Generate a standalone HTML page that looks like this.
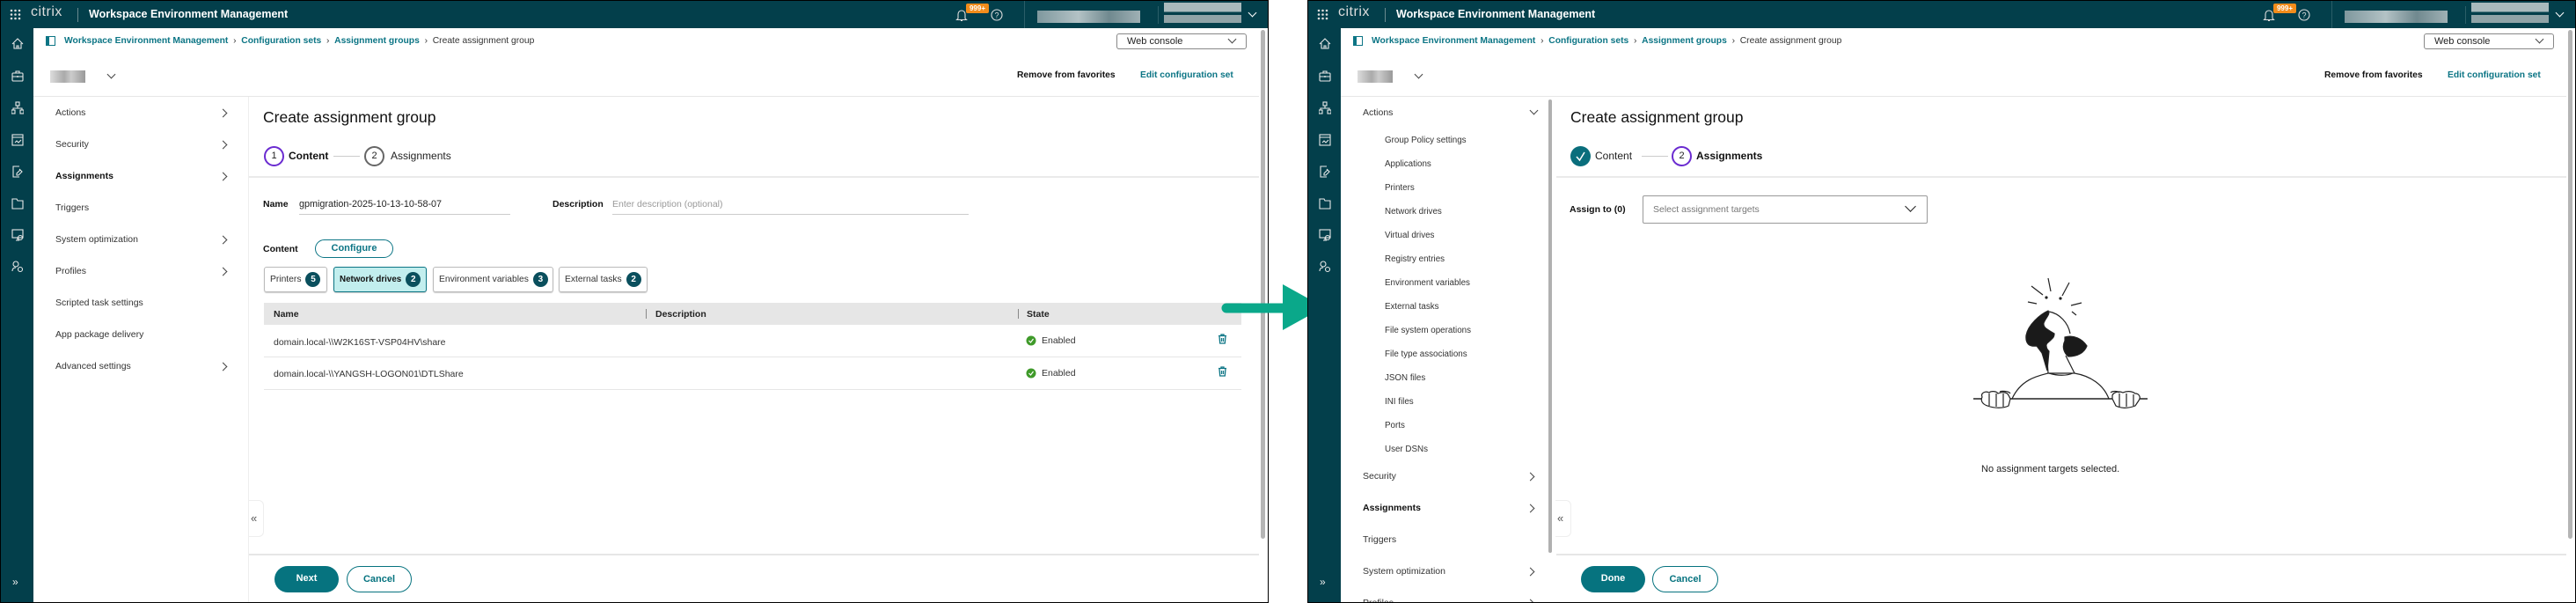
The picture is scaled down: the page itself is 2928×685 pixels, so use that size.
<!DOCTYPE html>
<html><head><meta charset="utf-8">
<style>
*{margin:0;padding:0;box-sizing:border-box}
body{width:2928px;height:685px;background:#fff;position:relative;overflow:hidden;font-family:"Liberation Sans",Arial,sans-serif;color:#222}
.a{position:absolute;white-space:nowrap;line-height:14px}
.p{position:absolute;top:0;width:1442px;height:685px;background:#fff;border:1px solid #000;overflow:hidden}
.top{position:absolute;left:0;top:0;width:1442px;height:31px;background:#033f4b}
.rail{position:absolute;left:0;top:31px;width:37px;height:654px;background:#033f4b}
.ln{position:absolute;background:#e6e6e6}
.link{color:#0c7585;font-weight:bold}
.nav{font-size:10.5px;color:#333}
.chev{position:absolute;width:7px;height:7px;border-right:1.3px solid #444;border-bottom:1.3px solid #444}
.badge{display:inline-block;width:17px;height:17px;border-radius:50%;background:#0a4f5d;color:#fff;font-size:10px;font-weight:bold;text-align:center;line-height:17px;margin-left:5px;vertical-align:middle}
.tab{position:absolute;top:302px;height:29px;border:1px solid #bbb;border-radius:3px;font-size:10.3px;line-height:27px;padding-left:6px;color:#333;box-shadow:0 1px 1px #ccc;white-space:nowrap;overflow:hidden}
.btn{position:absolute;height:30px;border-radius:15px;font-size:11px;font-weight:bold;text-align:center;line-height:28px}
</style></head><body>

<!-- ================= LEFT PANEL ================= -->
<div class="p" style="left:0">
 <div class="top"></div>
 <svg class="a" style="left:10px;top:9px" width="13" height="13"><g fill="#ddd"><circle cx="2" cy="2" r="1.3"/><circle cx="6.5" cy="2" r="1.3"/><circle cx="11" cy="2" r="1.3"/><circle cx="2" cy="6.5" r="1.3"/><circle cx="6.5" cy="6.5" r="1.3"/><circle cx="11" cy="6.5" r="1.3"/><circle cx="2" cy="11" r="1.3"/><circle cx="6.5" cy="11" r="1.3"/><circle cx="11" cy="11" r="1.3"/></g></svg>
 <div class="a" style="left:34px;top:6px;font-size:16px;color:#ddd;letter-spacing:0.5px">citrix</div>
 <div class="a" style="left:87px;top:8px;width:1px;height:16px;background:#6a8a90"></div>
 <div class="a" style="left:100px;top:8px;font-size:12.5px;font-weight:bold;color:#fff">Workspace Environment Management</div>
 <svg class="a" style="left:1085px;top:8px" width="14" height="16"><path d="M3 12V7a4 4 0 0 1 8 0v5l1.5 1.5h-11z M6 14.5h2" stroke="#ddd" fill="none" stroke-width="1.1"/></svg>
 <div class="a" style="left:1097px;top:3px;width:26px;height:11px;background:#f28c1b;border-radius:2px;color:#fff;font-size:8px;font-weight:bold;line-height:11px;text-align:center">999+</div>
 <svg class="a" style="left:1125px;top:9px" width="14" height="14"><circle cx="7" cy="7" r="6" stroke="#ddd" fill="none" stroke-width="1.1"/><text x="7" y="10.5" font-size="9" fill="#ddd" text-anchor="middle" font-family="Liberation Sans">?</text></svg>
 <div class="a" style="left:1163px;top:0;width:1px;height:31px;background:#2a5e68"></div>
 <div class="a" style="left:1178px;top:11px;width:117px;height:14px;background:linear-gradient(90deg,#7f989e,#b3c2c5 40%,#70898f 70%,#9fb1b5)"></div>
 <div class="a" style="left:1315px;top:6px;width:1px;height:20px;background:#2a5e68"></div>
 <div class="a" style="left:1322px;top:2px;width:88px;height:23px;background:linear-gradient(180deg,#a9babd 0,#a9babd 45%,#033f4b 45%,#033f4b 60%,#8fa3a7 60%)"></div>
 <div class="chev" style="left:1419px;top:10px;border-color:#fff;transform:rotate(45deg)"></div>

 <div class="rail"></div>
 <svg class="a" style="left:12px;top:42px" width="14" height="250" fill="none" stroke="#e8e8e8" stroke-width="1.1">
  <path d="M1 7L7 1l6 6M3 6v6h8V6M6 12V9h2v3"/>
  <g transform="translate(0,37)"><rect x="1" y="3" width="12" height="9" rx="1"/><path d="M5 3V1h4v2M1 7h12M7 6v2"/></g>
  <g transform="translate(0,73)"><rect x="5" y="0" width="4" height="4"/><rect x="0" y="9" width="4" height="4"/><rect x="10" y="9" width="4" height="4"/><path d="M7 4v3M2 9V7h10v2"/></g>
  <g transform="translate(0,109)"><rect x="1" y="1" width="12" height="12"/><path d="M1 4h12M4 10l2-2 2 2 3-3"/></g>
  <g transform="translate(0,145)"><path d="M9 1H2v12h7M9 4l3 3-4 4h-2v-2l4-4"/></g>
  <g transform="translate(0,181)"><path d="M1 2h5l1 2h6v9H1z"/></g>
  <g transform="translate(0,217)"><rect x="1" y="1" width="12" height="9"/><path d="M5 13h4M7 10v3"/><circle cx="10" cy="10" r="2.5"/></g>
 </svg>
 <svg class="a" style="left:12px;top:295px" width="14" height="14" fill="none" stroke="#e8e8e8" stroke-width="1.1"><circle cx="5" cy="4" r="3"/><path d="M1 12c0-3 2-4 4-4"/><circle cx="10" cy="10" r="2.5"/></svg>
 <div class="a" style="left:13px;top:653px;font-size:12px;color:#eee">»</div>

 <svg class="a" style="left:51px;top:40px" width="11" height="11"><rect x="0.5" y="0.5" width="10" height="10" stroke="#0c7585" fill="none"/><rect x="1" y="1" width="3" height="9" fill="#0c7585"/></svg>
 <div class="a" style="left:72px;top:39px;font-size:10.3px"><span class="link">Workspace Environment Management</span> <span style="color:#333">&nbsp;›&nbsp;</span> <span class="link">Configuration sets</span> <span style="color:#333">&nbsp;›&nbsp;</span> <span class="link">Assignment groups</span> <span style="color:#333">&nbsp;›&nbsp;</span> <span style="color:#333">Create assignment group</span></div>
 <div class="a" style="left:1268px;top:37px;width:148px;height:18px;border:1px solid #888;border-radius:3px"></div>
 <div class="a" style="left:1280px;top:39px;font-size:11px;color:#222">Web console</div>
 <div class="chev" style="left:1396px;top:40px;transform:rotate(45deg)"></div>
 <div class="a" style="left:1432px;top:33px;width:5px;height:578px;background:#b5b5b5;border-radius:3px"></div>

 <div class="a" style="left:56px;top:79px;width:40px;height:14px;background:linear-gradient(90deg,#ddd,#aaa 40%,#ccc 60%,#999)"></div>
 <div class="chev" style="left:122px;top:80px;transform:rotate(45deg)"></div>
 <div class="a" style="left:1155px;top:78px;font-size:10.3px;font-weight:bold;color:#111">Remove from favorites</div>
 <div class="a link" style="left:1295px;top:78px;font-size:10.3px">Edit configuration set</div>
 <div class="ln" style="left:37px;top:108px;width:1393px;height:1px"></div>

 <div class="ln" style="left:281px;top:109px;width:1px;height:576px;background:#eee"></div>
 <div class="a nav" style="left:62px;top:120px">Actions</div>
 <div class="a nav" style="left:62px;top:156px">Security</div>
 <div class="a nav" style="left:62px;top:192px;font-weight:bold;color:#111">Assignments</div>
 <div class="a nav" style="left:62px;top:228px">Triggers</div>
 <div class="a nav" style="left:62px;top:264px">System optimization</div>
 <div class="a nav" style="left:62px;top:300px">Profiles</div>
 <div class="a nav" style="left:62px;top:336px">Scripted task settings</div>
 <div class="a nav" style="left:62px;top:372px">App package delivery</div>
 <div class="a nav" style="left:62px;top:408px">Advanced settings</div>
 <div class="chev" style="left:249px;top:124px;transform:rotate(-45deg)"></div>
 <div class="chev" style="left:249px;top:160px;transform:rotate(-45deg)"></div>
 <div class="chev" style="left:249px;top:196px;transform:rotate(-45deg)"></div>
 <div class="chev" style="left:249px;top:268px;transform:rotate(-45deg)"></div>
 <div class="chev" style="left:249px;top:304px;transform:rotate(-45deg)"></div>
 <div class="chev" style="left:249px;top:412px;transform:rotate(-45deg)"></div>

 <div class="a" style="left:298px;top:122px;font-size:17.5px;line-height:20px;color:#111">Create assignment group</div>
 <div class="a" style="left:299px;top:165px;width:23px;height:23px;border:2px solid #6a2bd0;border-radius:50%;font-size:11px;line-height:19px;text-align:center">1</div>
 <div class="a" style="left:327px;top:169px;font-size:12px;font-weight:bold;color:#111">Content</div>
 <div class="a" style="left:378px;top:176px;width:30px;height:1px;background:#ccc"></div>
 <div class="a" style="left:413px;top:165px;width:23px;height:23px;border:2px solid #666;border-radius:50%;font-size:11px;line-height:19px;text-align:center">2</div>
 <div class="a" style="left:443px;top:169px;font-size:12px;color:#222">Assignments</div>
 <div class="ln" style="left:282px;top:199px;width:1148px;height:2px;background:#eaeaea"></div>

 <div class="a" style="left:298px;top:224px;font-size:10.5px;font-weight:bold;color:#111">Name</div>
 <div class="a" style="left:339px;top:224px;font-size:10.8px;color:#222">gpmigration-2025-10-13-10-58-07</div>
 <div class="ln" style="left:339px;top:242px;width:240px;height:1px;background:#ccc"></div>
 <div class="a" style="left:627px;top:224px;font-size:10.5px;font-weight:bold;color:#111">Description</div>
 <div class="a" style="left:695px;top:224px;font-size:10.5px;color:#999">Enter description (optional)</div>
 <div class="ln" style="left:695px;top:242px;width:405px;height:1px;background:#ccc"></div>

 <div class="a" style="left:298px;top:275px;font-size:10.5px;font-weight:bold;color:#111">Content</div>
 <div class="btn" style="left:357px;top:271px;width:89px;height:21px;line-height:19px;border:1.5px solid #0c7585;color:#0c7585">Configure</div>
 <div class="tab" style="left:299px;width:72px">Printers<span class="badge">5</span></div>
 <div class="tab" style="left:378px;width:106px;background:#c2eeee;border-color:#0c7585;font-weight:bold;color:#111;font-size:9.8px">Network drives<span class="badge">2</span></div>
 <div class="tab" style="left:491px;width:137px">Environment variables<span class="badge">3</span></div>
 <div class="tab" style="left:634px;width:101px">External tasks<span class="badge">2</span></div>

 <div class="a" style="left:299px;top:343px;width:1111px;height:25px;background:#e6e6e6"></div>
 <div class="a" style="left:310px;top:349px;font-size:10.5px;font-weight:bold;color:#222">Name</div>
 <div class="a" style="left:733px;top:350px;width:1px;height:11px;background:#888"></div>
 <div class="a" style="left:744px;top:349px;font-size:10.5px;font-weight:bold;color:#222">Description</div>
 <div class="a" style="left:1156px;top:350px;width:1px;height:11px;background:#888"></div>
 <div class="a" style="left:1166px;top:349px;font-size:10.5px;font-weight:bold;color:#222">State</div>
 <div class="a" style="left:310px;top:381px;font-size:10.5px;color:#333">domain.local-\\W2K16ST-VSP04HV\share</div>
 <div class="a" style="left:310px;top:417px;font-size:10.5px;color:#333">domain.local-\\YANGSH-LOGON01\DTLShare</div>
 <div class="ln" style="left:299px;top:404px;width:1111px;height:1px"></div>
 <div class="ln" style="left:299px;top:441px;width:1111px;height:1px"></div>
 <svg class="a" style="left:1165px;top:380px" width="12" height="50"><g><circle cx="6" cy="6" r="5.5" fill="#3f9a2a"/><path d="M3.5 6l2 2 3-4" stroke="#fff" fill="none" stroke-width="1.2"/></g><g transform="translate(0,37)"><circle cx="6" cy="6" r="5.5" fill="#3f9a2a"/><path d="M3.5 6l2 2 3-4" stroke="#fff" fill="none" stroke-width="1.2"/></g></svg>
 <div class="a" style="left:1183px;top:379px;font-size:10.5px;color:#333">Enabled</div>
 <div class="a" style="left:1183px;top:416px;font-size:10.5px;color:#333">Enabled</div>
 <svg class="a" style="left:1383px;top:378px" width="11" height="50" fill="none" stroke="#0c7585" stroke-width="1.3"><path d="M1 2.5h9M4 2.5V1h3v1.5M2 3l.7 8h5.6L9 3M4.5 5v4M6.5 5v4"/><g transform="translate(0,37)"><path d="M1 2.5h9M4 2.5V1h3v1.5M2 3l.7 8h5.6L9 3M4.5 5v4M6.5 5v4"/></g></svg>

 <div class="a" style="left:282px;top:567px;width:17px;height:42px;border:1px solid #eee;border-left:none;border-radius:0 6px 6px 0;font-size:13px;line-height:40px;color:#555;padding-left:2px">«</div>
 <div class="ln" style="left:282px;top:628px;width:1148px;height:2px;background:#e6e6e6"></div>
 <div class="btn" style="left:311px;top:642px;width:73px;background:#06737f;color:#fff">Next</div>
 <div class="btn" style="left:393px;top:642px;width:74px;border:1.5px solid #06737f;color:#06737f">Cancel</div>
</div>

<!-- arrow -->
<svg class="a" style="left:1380px;top:315px" width="130" height="70"><path d="M14 35h70" stroke="#0aa88a" stroke-width="11" stroke-linecap="round"/><path d="M78 8L125 34 78 60z" fill="#0aa88a"/></svg>

<!-- ================= RIGHT PANEL ================= -->
<div class="p" style="left:1486px">
 <div class="top"></div>
 <svg class="a" style="left:10px;top:9px" width="13" height="13"><g fill="#ddd"><circle cx="2" cy="2" r="1.3"/><circle cx="6.5" cy="2" r="1.3"/><circle cx="11" cy="2" r="1.3"/><circle cx="2" cy="6.5" r="1.3"/><circle cx="6.5" cy="6.5" r="1.3"/><circle cx="11" cy="6.5" r="1.3"/><circle cx="2" cy="11" r="1.3"/><circle cx="6.5" cy="11" r="1.3"/><circle cx="11" cy="11" r="1.3"/></g></svg>
 <div class="a" style="left:34px;top:6px;font-size:16px;color:#ddd;letter-spacing:0.5px">citrix</div>
 <div class="a" style="left:87px;top:8px;width:1px;height:16px;background:#6a8a90"></div>
 <div class="a" style="left:100px;top:8px;font-size:12.5px;font-weight:bold;color:#fff">Workspace Environment Management</div>
 <svg class="a" style="left:1085px;top:8px" width="14" height="16"><path d="M3 12V7a4 4 0 0 1 8 0v5l1.5 1.5h-11z M6 14.5h2" stroke="#ddd" fill="none" stroke-width="1.1"/></svg>
 <div class="a" style="left:1097px;top:3px;width:26px;height:11px;background:#f28c1b;border-radius:2px;color:#fff;font-size:8px;font-weight:bold;line-height:11px;text-align:center">999+</div>
 <svg class="a" style="left:1125px;top:9px" width="14" height="14"><circle cx="7" cy="7" r="6" stroke="#ddd" fill="none" stroke-width="1.1"/><text x="7" y="10.5" font-size="9" fill="#ddd" text-anchor="middle" font-family="Liberation Sans">?</text></svg>
 <div class="a" style="left:1163px;top:0;width:1px;height:31px;background:#2a5e68"></div>
 <div class="a" style="left:1178px;top:11px;width:117px;height:14px;background:linear-gradient(90deg,#7f989e,#b3c2c5 40%,#70898f 70%,#9fb1b5)"></div>
 <div class="a" style="left:1315px;top:6px;width:1px;height:20px;background:#2a5e68"></div>
 <div class="a" style="left:1322px;top:2px;width:88px;height:23px;background:linear-gradient(180deg,#a9babd 0,#a9babd 45%,#033f4b 45%,#033f4b 60%,#8fa3a7 60%)"></div>
 <div class="chev" style="left:1419px;top:10px;border-color:#fff;transform:rotate(45deg)"></div>

 <div class="rail"></div>
 <svg class="a" style="left:12px;top:42px" width="14" height="250" fill="none" stroke="#e8e8e8" stroke-width="1.1">
  <path d="M1 7L7 1l6 6M3 6v6h8V6M6 12V9h2v3"/>
  <g transform="translate(0,37)"><rect x="1" y="3" width="12" height="9" rx="1"/><path d="M5 3V1h4v2M1 7h12M7 6v2"/></g>
  <g transform="translate(0,73)"><rect x="5" y="0" width="4" height="4"/><rect x="0" y="9" width="4" height="4"/><rect x="10" y="9" width="4" height="4"/><path d="M7 4v3M2 9V7h10v2"/></g>
  <g transform="translate(0,109)"><rect x="1" y="1" width="12" height="12"/><path d="M1 4h12M4 10l2-2 2 2 3-3"/></g>
  <g transform="translate(0,145)"><path d="M9 1H2v12h7M9 4l3 3-4 4h-2v-2l4-4"/></g>
  <g transform="translate(0,181)"><path d="M1 2h5l1 2h6v9H1z"/></g>
  <g transform="translate(0,217)"><rect x="1" y="1" width="12" height="9"/><path d="M5 13h4M7 10v3"/><circle cx="10" cy="10" r="2.5"/></g>
 </svg>
 <svg class="a" style="left:12px;top:295px" width="14" height="14" fill="none" stroke="#e8e8e8" stroke-width="1.1"><circle cx="5" cy="4" r="3"/><path d="M1 12c0-3 2-4 4-4"/><circle cx="10" cy="10" r="2.5"/></svg>
 <div class="a" style="left:13px;top:653px;font-size:12px;color:#eee">»</div>

 <svg class="a" style="left:51px;top:40px" width="11" height="11"><rect x="0.5" y="0.5" width="10" height="10" stroke="#0c7585" fill="none"/><rect x="1" y="1" width="3" height="9" fill="#0c7585"/></svg>
 <div class="a" style="left:72px;top:39px;font-size:10.3px"><span class="link">Workspace Environment Management</span> <span style="color:#333">&nbsp;›&nbsp;</span> <span class="link">Configuration sets</span> <span style="color:#333">&nbsp;›&nbsp;</span> <span class="link">Assignment groups</span> <span style="color:#333">&nbsp;›&nbsp;</span> <span style="color:#333">Create assignment group</span></div>
 <div class="a" style="left:1268px;top:37px;width:148px;height:18px;border:1px solid #888;border-radius:3px"></div>
 <div class="a" style="left:1280px;top:39px;font-size:11px;color:#222">Web console</div>
 <div class="chev" style="left:1396px;top:40px;transform:rotate(45deg)"></div>
 <div class="a" style="left:1432px;top:33px;width:5px;height:578px;background:#b5b5b5;border-radius:3px"></div>

 <div class="a" style="left:56px;top:79px;width:40px;height:14px;background:linear-gradient(90deg,#ddd,#aaa 40%,#ccc 60%,#999)"></div>
 <div class="chev" style="left:122px;top:80px;transform:rotate(45deg)"></div>
 <div class="a" style="left:1155px;top:78px;font-size:10.3px;font-weight:bold;color:#111">Remove from favorites</div>
 <div class="a link" style="left:1295px;top:78px;font-size:10.3px">Edit configuration set</div>
 <div class="ln" style="left:37px;top:108px;width:1393px;height:1px"></div>

 <div class="a" style="left:273px;top:112px;width:4px;height:515px;background:#b0b0b0;border-radius:2px"></div>
 <div class="a nav" style="left:62px;top:120px">Actions</div>
 <div class="chev" style="left:253px;top:121px;transform:rotate(45deg)"></div>
 <div class="a" style="left:87px;top:145px;font-size:9.8px;color:#333;line-height:27px">Group Policy settings<br>Applications<br>Printers<br>Network drives<br>Virtual drives<br>Registry entries<br>Environment variables<br>External tasks<br>File system operations<br>File type associations<br>JSON files<br>INI files<br>Ports<br>User DSNs</div>
 <div class="a nav" style="left:62px;top:533px">Security</div>
 <div class="a nav" style="left:62px;top:569px;font-weight:bold;color:#111">Assignments</div>
 <div class="a nav" style="left:62px;top:605px">Triggers</div>
 <div class="a nav" style="left:62px;top:641px">System optimization</div>
 <div class="a nav" style="left:62px;top:677px">Profiles</div>
 <div class="chev" style="left:249px;top:537px;transform:rotate(-45deg)"></div>
 <div class="chev" style="left:249px;top:573px;transform:rotate(-45deg)"></div>
 <div class="chev" style="left:249px;top:645px;transform:rotate(-45deg)"></div>
 <div class="chev" style="left:249px;top:681px;transform:rotate(-45deg)"></div>

 <div class="a" style="left:298px;top:122px;font-size:17.5px;line-height:20px;color:#111">Create assignment group</div>
 <svg class="a" style="left:298px;top:165px" width="23" height="23"><circle cx="11.5" cy="11.5" r="11.5" fill="#0a6e7c"/><path d="M7 12l3.5 4L16 7" stroke="#fff" fill="none" stroke-width="1.5"/></svg>
 <div class="a" style="left:326px;top:169px;font-size:12px;color:#222">Content</div>
 <div class="a" style="left:379px;top:176px;width:30px;height:1px;background:#ccc"></div>
 <div class="a" style="left:413px;top:165px;width:23px;height:23px;border:2px solid #6a2bd0;border-radius:50%;font-size:11px;line-height:19px;text-align:center">2</div>
 <div class="a" style="left:441px;top:169px;font-size:12px;font-weight:bold;color:#111">Assignments</div>
 <div class="ln" style="left:282px;top:199px;width:1148px;height:2px;background:#eaeaea"></div>

 <div class="a" style="left:297px;top:230px;font-size:10.5px;font-weight:bold;color:#111">Assign to (0)</div>
 <div class="a" style="left:380px;top:221px;width:324px;height:32px;border:1px solid #999;border-radius:2px"></div>
 <div class="a" style="left:392px;top:230px;font-size:10.5px;color:#777">Select assignment targets</div>
 <div class="chev" style="left:680px;top:229px;width:9px;height:9px;border-color:#222;border-width:1.6px;transform:rotate(45deg)"></div>

 <svg class="a" style="left:714px;top:280px" width="300" height="200" fill="none" stroke="#222" stroke-width="1.2">
  <path d="M42 172H240" stroke-width="1.5"/>
  <path d="M86 172C96 150 115 146 127 143H157C175 146 190 156 196 172"/>
  <path d="M125 112L127 143M147 123L157 143"/>
  <path d="M128 143C138 146 148 146 155 143"/>
  <path d="M128 73C140 75 150 86 152 98"/>
  <path d="M127 72C118 76 104 88 102 100C101 110 106 113 114 112L120 120C122 126 124 134 126 140L128 118C124 114 124 110 127 108C131 104 134 103 134 98C128 94 121 92 122 86C124 80 130 76 127 72Z" fill="#1a1a1a"/>
  <path d="M146 102C156 99 166 104 171 112C168 120 160 124 150 124C146 121 142 114 146 106Z" fill="#1a1a1a"/>
  <path d="M108 44L121 54M127 35L130 50M151 40L143 55M104 62L114 64M153 66L165 63M154 73L159 77"/>
  <circle cx="125" cy="57" r="1" fill="#222"/><circle cx="141" cy="58" r="1" fill="#222"/>
  <path d="M52 170C50 165 56 163 60 165C62 163 68 163 70 166C74 164 80 164 82 168L84 172 82 180C76 183 66 183 58 180C52 178 50 174 52 170Z" fill="#fff"/>
  <path d="M60 166L60 180M68 166V181M76 166V181M72 164C74 163 82 163 84 166"/>
  <path d="M200 168C202 164 208 163 212 165C216 163 222 163 226 166C230 166 233 170 230 174L226 180C218 183 210 183 204 180L200 172Z" fill="#fff"/>
  <path d="M208 166V181M216 166V181M224 167V180M198 165C200 163 206 163 208 165"/>
 </svg>
 <div class="a" style="left:765px;top:525px;font-size:11px;color:#222">No assignment targets selected.</div>

 <div class="a" style="left:281px;top:567px;width:18px;height:42px;border:1px solid #eee;border-left:none;border-radius:0 6px 6px 0;font-size:13px;line-height:40px;color:#555;padding-left:2px">«</div>
 <div class="ln" style="left:282px;top:628px;width:1148px;height:2px;background:#e6e6e6"></div>
 <div class="btn" style="left:310px;top:642px;width:73px;background:#06737f;color:#fff">Done</div>
 <div class="btn" style="left:391px;top:642px;width:75px;border:1.5px solid #06737f;color:#06737f">Cancel</div>
</div>
</body></html>
